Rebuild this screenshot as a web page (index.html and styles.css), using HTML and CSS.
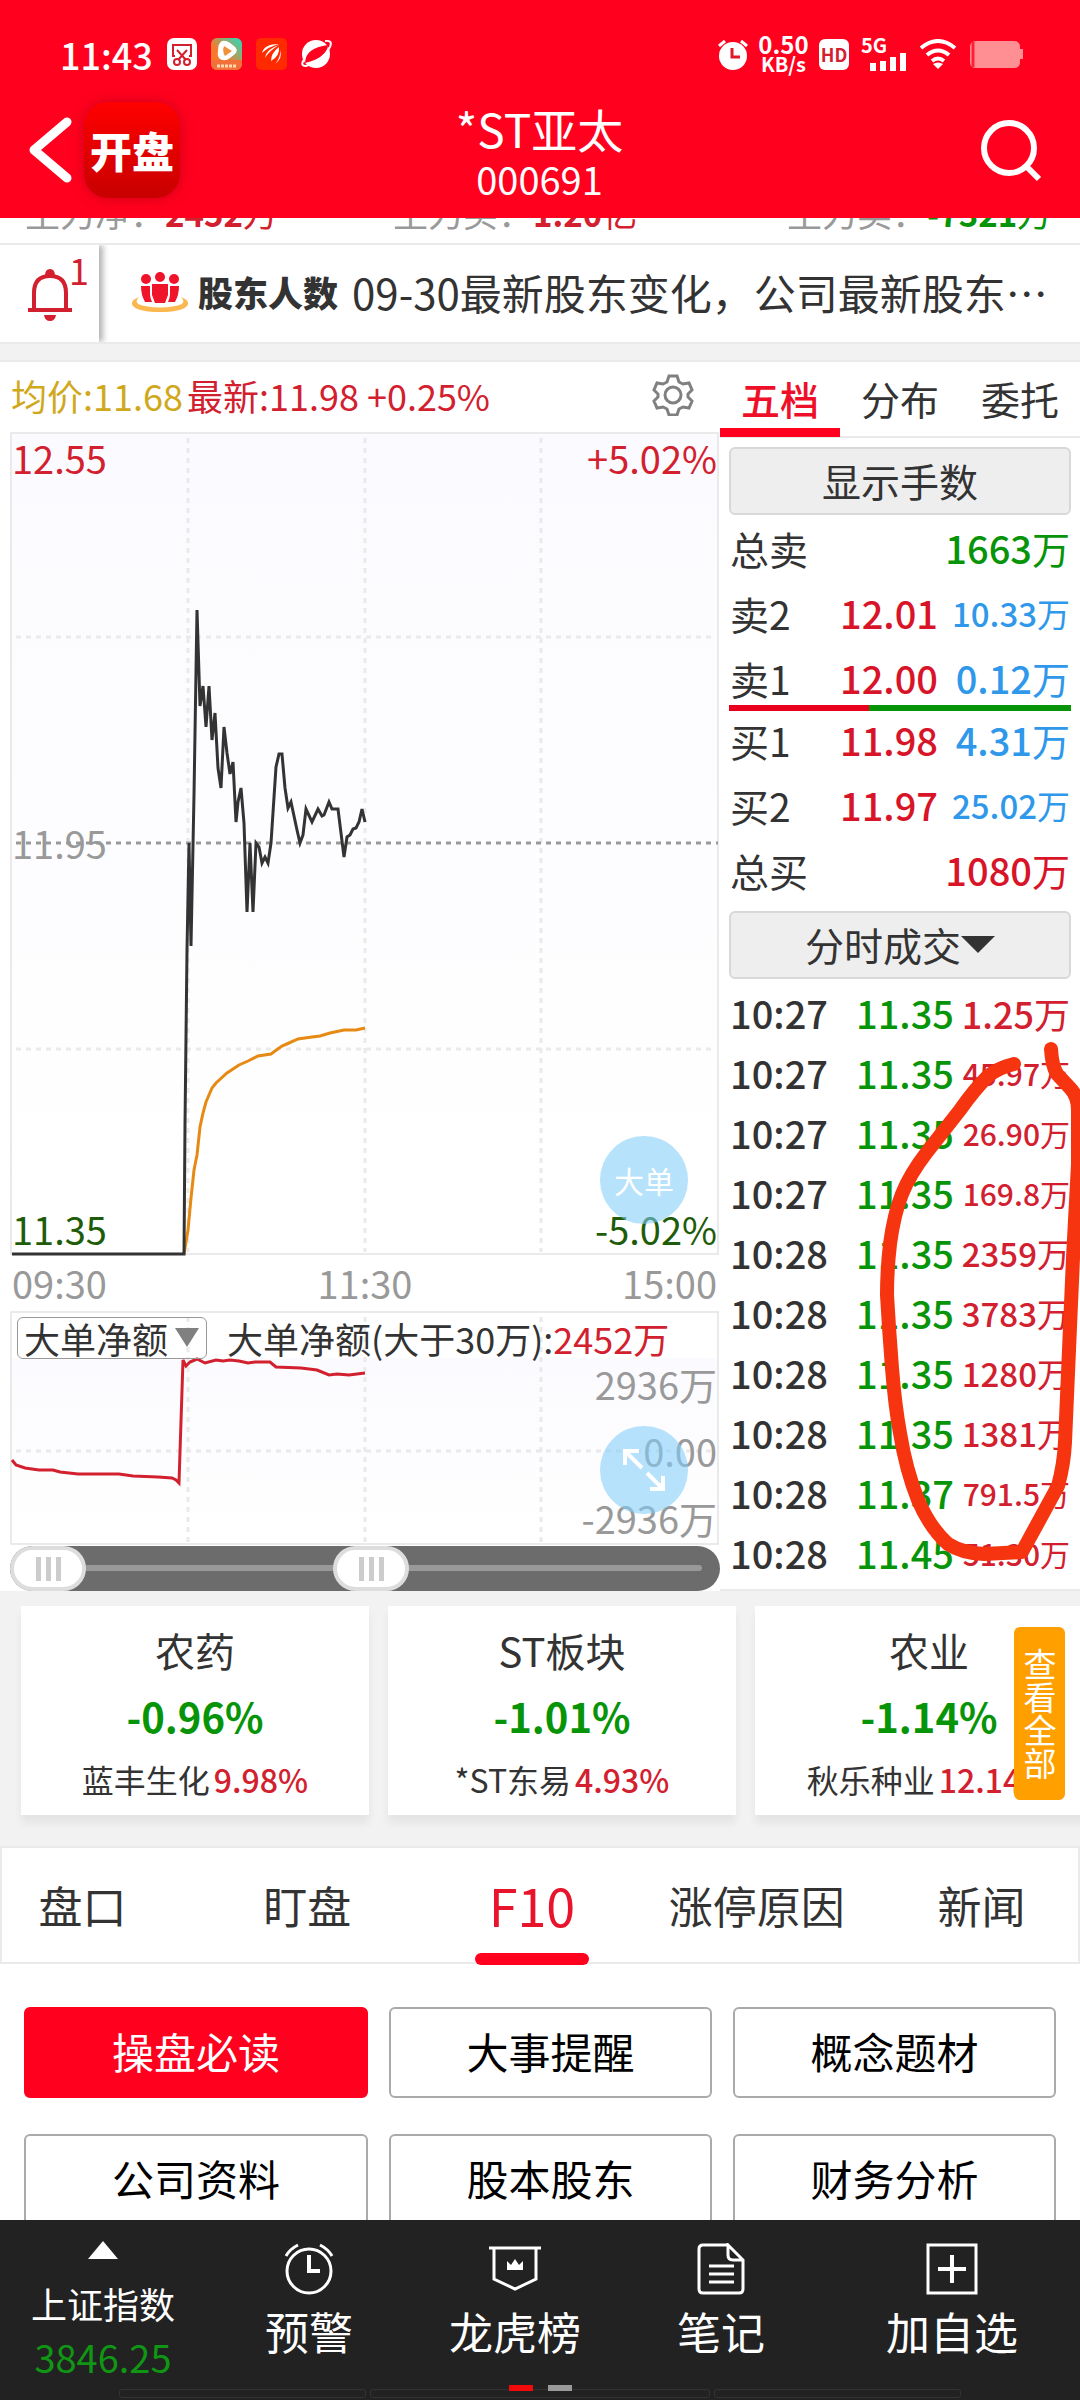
FILE: index.html
```html
<!DOCTYPE html>
<html lang="zh-CN">
<head>
    <meta charset="UTF-8">
    <meta name="viewport" content="width=device-width, initial-scale=1.0">
    <title>*ST亚太 000691</title>
    <link rel="stylesheet" href="styles.css">
</head>
<body>
    <header class="header">
        <div class="status-bar">
            <span class="clock">11:43</span>
            <svg class="status-icon" width="30" height="32" viewBox="0 0 30 32">
                <rect width="30" height="32" rx="7" fill="#fff"/>
                <path d="M8 18H6V7h18v11h-2M10 12l9 10M20 12l-9 10" fill="none" stroke="#d2202f" stroke-width="2"/>
                <circle cx="10" cy="24" r="3" fill="none" stroke="#d2202f" stroke-width="2"/>
                <circle cx="20" cy="24" r="3" fill="none" stroke="#d2202f" stroke-width="2"/>
            </svg>
            <svg class="status-icon" width="31" height="32" viewBox="0 0 31 32">
                <defs>
                    <linearGradient id="video" x1="0" y1="1" x2="1" y2="0">
                        <stop offset="0.4" stop-color="#f77a2c"/>
                        <stop offset="1" stop-color="#1fe0c0"/>
                    </linearGradient>
                </defs>
                <rect width="31" height="32" rx="6" fill="url(#video)"/>
                <path d="M0 22h31v4a6 6 0 0 1-6 6H6a6 6 0 0 1-6-6z" fill="#f4703a"/>
                <path d="M11 3q4-1 8 2l4 3q5 4 1 8l-5 4q-5 4-10 1-3-2-2-8 0-8 4-10z" fill="#fff"/>
                <path d="M13 8l8 5-7 5q-3-5-1-10z" fill="#f0923a"/>
                <path d="M6 28h20" stroke="#ffd9b0" stroke-width="3" stroke-dasharray="3 1"/>
            </svg>
            <svg class="status-icon" width="31" height="32" viewBox="0 0 31 32">
                <rect width="31" height="32" rx="5" fill="#ff2a00"/>
                <path d="M6 15Q8 6 23 6 12 9 6 15zM9 20q1-9 14-13Q13 13 9 20zM15 23q0-8 8-14 1 9-8 14zM19 26q6-7 5-14 3 8-5 14z" fill="#fff"/>
            </svg>
            <svg class="status-icon" width="31" height="32" viewBox="0 0 31 32">
                <circle cx="15" cy="16" r="14" fill="#fff"/>
                <path d="M4 25Q4 10 27 7q0 12-23 18z" fill="#ff001e"/>
                <path d="M4 20q-6 8 1 8Q21 23 29 9q3-7-5-6" fill="none" stroke="#fff" stroke-width="2"/>
            </svg>
            <span class="status-space"></span>
            <svg width="30" height="32" viewBox="0 0 30 32">
                <circle cx="15" cy="18" r="14" fill="#fff"/>
                <path d="M1 8l6-5M29 8l-6-5" stroke="#fff" stroke-width="3"/>
                <path d="M14 10v9h8" fill="none" stroke="#e0182c" stroke-width="3"/>
            </svg>
            <span class="speed"><b>0.50</b><b class="unit">KB/s</b></span>
            <span class="hd">HD</span>
            <span class="signal">
                <b>5G</b>
                <svg width="36" height="18" viewBox="0 0 36 18">
                    <path d="M3 18v-8M13 18V8M23 18V4M33 18V0" stroke="#fff" stroke-width="6"/>
                </svg>
            </span>
            <svg class="wifi" width="38" height="30" viewBox="0 0 38 30">
                <path d="M2 9q17-14 34 0M8 16q11-9 22 0M13 22q6-5 12 0" fill="none" stroke="#fff" stroke-width="4"/>
                <path d="M14 25q5-3 10 0l-5 5z" fill="#fff"/>
            </svg>
            <svg class="battery" width="55" height="29" viewBox="0 0 55 29">
                <path d="M7 1h38q6 0 6 6v2h3v10h-3v3q0 6-6 6H7q-6 0-6-6V7q0-6 6-6z" fill="#ff8f93"/>
                <path d="M4 2v25" stroke="#ff2038" stroke-width="3"/>
            </svg>
        </div>
        <div class="app-bar">
            <div class="app-left">
                <button class="icon-button" aria-label="返回">
                    <svg width="44" height="66" viewBox="0 0 44 66">
                        <path d="M38 5L5 33l33 28" fill="none" stroke="#fff" stroke-width="9" stroke-linecap="round" stroke-linejoin="round"/>
                    </svg>
                </button>
                <a class="app-logo" href="#">开盘</a>
            </div>
            <h1 class="title">*ST亚太<small>000691</small></h1>
            <div class="app-right">
                <button class="icon-button" aria-label="搜索">
                    <svg width="64" height="64" viewBox="0 0 64 64">
                        <circle cx="29" cy="30" r="25" fill="none" stroke="#fff" stroke-width="6"/>
                        <path d="M46 48l13 13" stroke="#fff" stroke-width="6"/>
                    </svg>
                </button>
            </div>
        </div>
    </header>

    <main class="main">
        <div class="funds">
            <span>主力净：<b class="red">2452</b><span class="red">万</span></span>
            <span>主力买：<b class="red">1.20</b><span class="red">亿</span></span>
            <span>主力卖：<b class="green">-7321</b><span class="green">万</span></span>
        </div>

        <div class="notice">
            <button class="bell" aria-label="提醒">
                <svg width="46" height="54" viewBox="0 0 46 54">
                    <path d="M7 42V26q0-17 16-17t16 17v16M1 43h44" fill="none" stroke="#d2202f" stroke-width="4"/>
                    <path d="M18 9q0-7 5-7t5 7zM17 48h12q-1 6-6 6t-6-6z" fill="#d2202f"/>
                </svg>
                <span class="bell-count">1</span>
            </button>
            <a class="notice-link" href="#">
                <svg class="people" width="56" height="40" viewBox="0 0 56 40">
                    <path d="M7 25q-7 7 6 9 15 3 30 0 13-2 6-9 10 4 6 9-6 6-27 6T1 34q-4-5 6-9z" fill="#fbb850"/>
                    <g fill="#f0142b">
                        <circle cx="14" cy="7" r="5"/><circle cx="28" cy="5" r="5"/><circle cx="42" cy="7" r="5"/>
                        <path d="M9 14h9v8q0 4 2 8h-7q-4-7-4-16zM38 14h9q0 9-4 16h-7q2-4 2-8zM20 12h16v11l-3 8H23l-3-8z"/>
                    </g>
                </svg>
                <b>股东人数</b>
                <span class="notice-text">09-30最新股东变化，公司最新股东…</span>
            </a>
        </div>

        <div class="market">
            <section class="charts">
                <div class="quote">
                    <span class="gold">均价:11.68</span>
                    <span class="red">最新:11.98 +0.25%</span>
                    <button class="icon-button gear" aria-label="设置">
                        <svg width="42" height="42" viewBox="0 0 42 42" fill="none" stroke="#808080" stroke-width="3">
                            <path d="M17 2h8l2 6 4 2 6-1 3 7-4 4v3l4 4-3 7-6-1-4 2-2 6h-8l-2-6-4-2-6 1-3-7 4-4v-3l-4-4 3-7 6 1 4-2z"/>
                            <circle cx="21" cy="21" r="8"/>
                        </svg>
                    </button>
                </div>

                <div class="chart">
                    <svg viewBox="0 0 720 874">
                        <defs>
                            <linearGradient id="sky" x1="0" y1="0" x2="0" y2="1">
                                <stop offset="0" stop-color="#fbfbff"/>
                                <stop offset="1" stop-color="#fff"/>
                            </linearGradient>
                        </defs>
                        <rect class="frame" x="11" y="1" width="707" height="821" fill="url(#sky)"/>
                        <path class="grid" d="M188 6v814M365 6v814M541 6v814"/>
                        <path class="grid" d="M16 205h700M16 617h700"/>
                        <path class="middle" d="M16 411h702"/>
                        <text x="12" y="42" class="up">12.55</text>
                        <text x="717" y="42" class="up end">+5.02%</text>
                        <text x="12" y="427" class="axis">11.95</text>
                        <text x="12" y="813" class="down">11.35</text>
                        <text x="717" y="813" class="down end">-5.02%</text>
                        <polyline class="average" points="184,822 188,798 191,766 194,738 197,723 200,695 203,681 206,670 212,656 216,651 227,641 233,637 239,633 248,629 258,624 271,622 275,619 282,614 289,611 298,607 312,605 320,604 330,601 344,598 356,598 365,596"/>
                        <polyline class="price" points="12,822 184,822 185,693 187,518 189,411 191,514 194,363 197,178 200,274 203,254 206,295 209,254 212,308 215,281 218,336 221,356 224,295 227,321 230,342 233,330 236,390 238,370 241,356 244,391 247,480 250,411 253,480 256,411 259,415 262,431 265,425 268,431 271,411 276,335 279,322 282,322 285,356 288,376 291,370 297,398 300,411 303,403 306,377 312,390 318,377 322,384 324,383 329,370 332,377 338,377 344,425 347,405 350,403 353,397 356,396 359,390 362,377 365,390"/>
                        <text x="12" y="867" class="axis">09:30</text>
                        <text x="365" y="867" class="axis center">11:30</text>
                        <text x="717" y="867" class="axis end">15:00</text>
                    </svg>
                    <button class="bubble bubble-order">大单</button>
                </div>

                <div class="chart flow">
                    <svg viewBox="0 0 720 240">
                        <rect class="frame" x="11" y="6" width="707" height="232" fill="#fff"/>
                        <rect x="12" y="52" width="705" height="185" fill="url(#sky)"/>
                        <path class="grid" d="M188 11v226M365 11v226M541 11v226"/>
                        <path class="grid" d="M16 145h700"/>
                        <text x="717" y="94" class="axis end">2936万</text>
                        <text x="717" y="161" class="axis end">0.00</text>
                        <text x="717" y="228" class="axis end">-2936万</text>
                        <polyline class="net" points="12,154 16,159 25,162 39,164 53,164 60,166 78,168 119,168 133,170 158,171 172,172 176,174 179,177 183,54 186,60 190,56 197,53 205,57 216,54 223,55 230,54 239,55 248,57 255,56 270,56 276,61 301,62 317,64 329,69 337,68 349,69 365,67"/>
                    </svg>
                    <div class="flow-head">
                        <span class="picker">
                            <select aria-label="指标">
                                <option>大单净额</option>
                                <option>主力净额</option>
                            </select>
                        </span>
                        <span>大单净额(大于30万):<span class="red">2452万</span></span>
                    </div>
                    <button class="bubble bubble-expand" aria-label="放大">
                        <svg width="44" height="44" viewBox="0 0 44 44" fill="none" stroke="#fff" stroke-width="4">
                            <path d="M20 20L4 4M3 17V3h14M25 25l16 16M41 28v13H28"/>
                        </svg>
                    </button>
                </div>

                <div class="range">
                    <input type="range" min="0" max="100" value="0" aria-label="开始时间">
                    <input type="range" min="0" max="100" value="51" aria-label="结束时间">
                </div>
            </section>

            <section class="orders">
                <nav class="order-tabs">
                    <a class="active" href="#">五档</a>
                    <a href="#">分布</a>
                    <a href="#">委托</a>
                </nav>
                <button class="gray-button">显示手数</button>
                <table class="levels">
                    <tr><th>总卖</th><td></td><td class="green"><b>1663</b>万</td></tr>
                    <tr><th>卖2</th><td class="red"><b>12.01</b></td><td class="blue small"><b>10.33</b>万</td></tr>
                    <tr><th>卖1</th><td class="red"><b>12.00</b></td><td class="blue"><b>0.12</b>万</td></tr>
                </table>
                <div class="ratio"></div>
                <table class="levels">
                    <tr><th>买1</th><td class="red"><b>11.98</b></td><td class="blue"><b>4.31</b>万</td></tr>
                    <tr><th>买2</th><td class="red"><b>11.97</b></td><td class="blue small"><b>25.02</b>万</td></tr>
                    <tr><th>总买</th><td></td><td class="red"><b>1080</b>万</td></tr>
                </table>
                <button class="gray-button">分时成交<i class="caret"></i></button>
                <table class="trades">
                    <tr><td>10:27</td><td>11.35</td><td class="medium"><b>1.25</b>万</td></tr>
                    <tr><td>10:27</td><td>11.35</td><td class="tiny"><b>45.97</b>万</td></tr>
                    <tr><td>10:27</td><td>11.35</td><td class="tiny"><b>26.90</b>万</td></tr>
                    <tr><td>10:27</td><td>11.35</td><td class="tiny"><b>169.8</b>万</td></tr>
                    <tr><td>10:28</td><td>11.35</td><td><b>2359</b>万</td></tr>
                    <tr><td>10:28</td><td>11.35</td><td><b>3783</b>万</td></tr>
                    <tr><td>10:28</td><td>11.35</td><td><b>1280</b>万</td></tr>
                    <tr><td>10:28</td><td>11.35</td><td><b>1381</b>万</td></tr>
                    <tr><td>10:28</td><td>11.37</td><td class="tiny"><b>791.5</b>万</td></tr>
                    <tr><td>10:28</td><td>11.45</td><td class="tiny"><b>51.30</b>万</td></tr>
                </table>
                <!-- hand-drawn circle round the big trades -->
                <svg class="marker" width="210" height="540" viewBox="0 0 210 540">
                    <path d="M144 34Q128 38 118 46 104 60 90 80L57 122Q40 144 32 164 24 184 20 214 17 240 17 265 19 300 22 338 25 376 30 403 36 440 48 470 60 498 78 514 92 523 114 524L152 522 188 456Q194 434 195 412L200 297 203 228 208 134 208 80Q208 66 200 58L187 44Q182 36 181 19"/>
                </svg>
            </section>
        </div>

        <div class="sectors">
            <div class="cards">
                <a class="card" href="#">
                    <span class="card-name">农药</span>
                    <b class="card-change green">-0.96%</b>
                    <span class="card-stock">蓝丰生化<b class="red">9.98%</b></span>
                </a>
                <a class="card" href="#">
                    <span class="card-name">ST板块</span>
                    <b class="card-change green">-1.01%</b>
                    <span class="card-stock">*ST东易<b class="red">4.93%</b></span>
                </a>
                <a class="card" href="#">
                    <span class="card-name">农业</span>
                    <b class="card-change green">-1.14%</b>
                    <span class="card-stock">秋乐种业<b class="red">12.14%</b></span>
                </a>
            </div>
            <button class="view-all">查看全部</button>
        </div>

        <nav class="tabs">
            <div class="tabs-inner">
                <a href="#">盘口</a>
                <a href="#">盯盘</a>
                <a class="active" href="#">F10</a>
                <a href="#">涨停原因</a>
                <a href="#">新闻</a>
            </div>
        </nav>

        <div class="topics">
            <button class="active">操盘必读</button>
            <button>大事提醒</button>
            <button>概念题材</button>
            <button>公司资料</button>
            <button>股本股东</button>
            <button>财务分析</button>
        </div>
    </main>

    <footer class="footer">
        <a class="index" href="#">
            <svg width="30" height="18" viewBox="0 0 30 18"><path d="M15 0l15 18H0z" fill="#fff"/></svg>
            <span>上证指数</span>
            <span class="index-value">3846.25</span>
        </a>
        <a class="action" href="#">
            <svg width="52" height="52" viewBox="0 0 52 52" fill="none" stroke="#fff" stroke-width="3">
                <circle cx="26" cy="28" r="22"/>
                <path d="M26 12v16h11" stroke-width="4"/>
                <path d="M3 13q4-7 12-11M49 13q-4-7-12-11"/>
            </svg>
            <span>预警</span>
        </a>
        <a class="action" href="#">
            <svg width="52" height="52" viewBox="0 0 52 52" fill="none" stroke="#fff" stroke-width="3">
                <path d="M0 5h52M5 5v31l21 10 21-10V5"/>
                <path d="M18 27V18l4 4 4-6 4 6 4-4v9z" fill="#fff" stroke="none"/>
            </svg>
            <span>龙虎榜</span>
        </a>
        <a class="action" href="#">
            <svg width="52" height="52" viewBox="0 0 52 52" fill="none" stroke="#fff" stroke-width="3">
                <path d="M33 2H8q-4 0-4 4v40q0 4 4 4h36q4 0 4-4V17L33 2v10q0 5 5 5h10M14 23h25M14 31h25M14 39h25"/>
            </svg>
            <span>笔记</span>
        </a>
        <a class="action" href="#">
            <svg width="52" height="52" viewBox="0 0 52 52" fill="none" stroke="#fff" stroke-width="3">
                <path d="M2 2h48v48H2z"/>
                <path d="M26 12v28M12 26h28" stroke-width="4"/>
            </svg>
            <span>加自选</span>
        </a>
        <div class="handles"><i></i><i></i><i></i></div>
        <div class="dots"><i></i><i></i></div>
    </footer>
</body>
</html>
```
FILE: styles.css
```css
* {
    box-sizing: border-box;
}
body {
    margin: 0;
    height: 100vh;
    display: flex;
    flex-direction: column;
    overflow: hidden;
    background: #fff;
    color: #333;
    font-family: "Noto Sans CJK SC", "Noto Sans", sans-serif;
    font-size: 39px;
}
a {
    color: inherit;
    text-decoration: none;
}
button, select {
    font-family: inherit;
    color: inherit;
    padding: 0;
    border: none;
    background: none;
    cursor: pointer;
}
svg {
    display: block;
    flex: none;
}
b {
    font-weight: 500;
}
.red {
    color: #d2202f;
}
.green {
    color: #089408;
}
.blue {
    color: #2f98ea;
}
.gold {
    color: #d0a81c;
}

/* header */
.header {
    flex: none;
    background: #ff001e;
    color: #fff;
}
.status-bar {
    display: flex;
    align-items: center;
    height: 82px;
    padding: 26px 60px 0;
}
.clock {
    width: 107px;
    font-size: 36px;
    font-weight: 500;
    line-height: 50px;
}
.status-icon {
    margin-right: 14px;
}
.status-space {
    flex: 1;
}
.speed {
    width: 51px;
    margin: 0 10px;
    font-size: 24px;
    line-height: 20px;
    text-align: center;
}
.speed b {
    display: block;
    font-weight: 700;
}
.speed .unit {
    font-size: 20px;
}
.hd {
    width: 30px;
    border-radius: 6px;
    background: #fff;
    color: #d2202f;
    font-size: 18px;
    font-weight: 700;
    line-height: 31px;
    text-align: center;
}
.signal {
    display: flex;
    flex-direction: column;
    width: 46px;
    margin-left: 12px;
    font-size: 20px;
    line-height: 16px;
}
.signal b {
    font-weight: 700;
}
.signal svg {
    margin-left: 9px;
}
.wifi {
    margin: 0 12px;
}
.battery {
    margin-right: -4px;
}
.app-bar {
    display: grid;
    grid-template-columns: 1fr auto 1fr;
    align-items: center;
    height: 136px;
    padding: 0 36px 0 29px;
}
.icon-button {
    display: block;
}
.app-left {
    display: flex;
    align-items: center;
    gap: 11px;
}
.app-right {
    display: flex;
    justify-content: flex-end;
}
.app-logo {
    width: 96px;
    border-radius: 24px;
    background: linear-gradient(#ff0000, #c80000);
    box-shadow: 0 0 12px rgba(160, 0, 20, 0.5);
    font-size: 42px;
    font-weight: 900;
    line-height: 96px;
    text-align: center;
}
.title {
    margin: 0;
    padding: 4px 0 0 6px;
    font-size: 46px;
    font-weight: 400;
    line-height: 54px;
    text-align: center;
}
.title small {
    display: block;
    font-size: 38px;
    line-height: 48px;
}

/* scrolled page */
.main {
    flex: 1;
    min-height: 0;
    overflow: hidden;
}
.funds {
    display: grid;
    grid-template-columns: 368fr 394fr 268fr;
    align-content: end;
    height: 27px;
    padding: 0 25px 6px;
    border-bottom: 2px solid #eaeaea;
    color: #999;
    font-size: 35px;
    line-height: 48px;
    white-space: nowrap;
    overflow: hidden;
}
.funds b {
    font-size: 33px;
    font-weight: 700;
}
.notice {
    display: flex;
    height: 99px;
    border-bottom: 2px solid #eaeaea;
    overflow: hidden;
}
.bell {
    position: relative;
    flex: none;
    width: 99px;
    padding-left: 27px;
    box-shadow: 4px 0 6px rgba(0, 0, 0, 0.3);
}
.bell-count {
    position: absolute;
    top: 4px;
    right: 10px;
    color: #d2202f;
    font-size: 36px;
    line-height: 40px;
}
.notice-link {
    display: flex;
    align-items: center;
    min-width: 0;
    padding: 0 0 4px 33px;
}
.notice-link b {
    flex: none;
    margin: 0 14px 0 10px;
    font-size: 35px;
    font-weight: 900;
}
.notice-text {
    font-size: 42px;
    white-space: nowrap;
}
.market {
    display: grid;
    grid-template-columns: 2fr 1fr;
    border-top: 16px solid #f2f2f2;
}

/* charts */
.quote {
    display: flex;
    align-items: center;
    gap: 4px;
    height: 72px;
    padding: 0 26px 4px 11px;
    border-top: 2px solid #eaeaea;
    font-size: 36px;
    white-space: nowrap;
}
.gear {
    margin-left: auto;
}
.chart {
    position: relative;
}
.chart > svg {
    width: 100%;
}
.chart text {
    font-size: 38px;
}
.frame {
    stroke: #eaeaea;
    stroke-width: 2;
}
.grid {
    stroke: #eaeaea;
    stroke-width: 3;
    stroke-dasharray: 5 5;
}
.middle {
    stroke: #999;
    stroke-width: 3;
    stroke-dasharray: 5 5;
}
.axis {
    fill: #999;
}
.up {
    fill: #d2202f;
}
.down {
    fill: #1f5c0a;
}
.end {
    text-anchor: end;
}
.center {
    text-anchor: middle;
}
.price, .average, .net {
    fill: none;
    stroke: #333;
    stroke-width: 3;
}
.average {
    stroke: #e68a14;
}
.net {
    stroke: #d2202f;
}
.bubble {
    position: absolute;
    right: 32px;
    display: flex;
    align-items: center;
    justify-content: center;
    width: 88px;
    height: 88px;
    border-radius: 50%;
    background: rgba(130, 205, 250, 0.58);
    color: #fff;
    font-size: 30px;
}
.bubble-order {
    bottom: 82px;
}
.bubble-expand {
    bottom: 32px;
}
.flow-head {
    position: absolute;
    top: 11px;
    left: 17px;
    display: flex;
    align-items: center;
    gap: 20px;
    font-size: 36px;
    line-height: 42px;
    white-space: nowrap;
}
.picker {
    position: relative;
}
.picker::after {
    content: "";
    position: absolute;
    top: 11px;
    right: 8px;
    border: 12px solid transparent;
    border-top: 19px solid #808080;
    border-bottom: 0;
    pointer-events: none;
}
.picker select {
    display: block;
    width: 190px;
    height: 42px;
    padding-left: 6px;
    border: 1px solid #999;
    border-radius: 6px;
    appearance: none;
    font-size: 36px;
    line-height: 40px;
}
.range {
    position: relative;
    height: 45px;
    margin-left: 10px;
    border-radius: 23px;
    background: #6c6c6c;
}
.range::before {
    content: "";
    position: absolute;
    top: 19px;
    left: 70px;
    right: 18px;
    height: 6px;
    border-radius: 3px;
    background: #999;
}
.range input {
    position: absolute;
    inset: 0;
    width: 100%;
    height: 45px;
    margin: 0;
    appearance: none;
    background: none;
    pointer-events: none;
}
.range input::-webkit-slider-thumb {
    appearance: none;
    width: 76px;
    height: 45px;
    border: 4px solid #ddd;
    border-radius: 23px;
    background: linear-gradient(90deg, #ccc 5px, transparent 5px 10px, #ccc 10px 15px, transparent 15px 20px, #ccc 20px) center / 25px 24px no-repeat #fff;
    pointer-events: auto;
}

/* order book */
.orders {
    position: relative;
    border-top: 2px solid #eaeaea;
    border-bottom: 2px solid #eaeaea;
}
.order-tabs {
    display: grid;
    grid-template-columns: repeat(3, 1fr);
    height: 76px;
    border-bottom: 2px solid #eaeaea;
    line-height: 72px;
    text-align: center;
}
.order-tabs .active {
    height: 75px;
    border-bottom: 9px solid #ff001e;
    color: #ee1028;
    font-weight: 500;
}
.gray-button {
    display: flex;
    align-items: center;
    justify-content: center;
    width: calc(100% - 18px);
    height: 68px;
    margin: 9px 9px 0;
    padding-bottom: 2px;
    border: 2px solid #d8d8d8;
    border-radius: 6px;
    background: #eee;
    font-size: 39px;
}
.caret {
    border: 17px solid transparent;
    border-top-color: #333;
    border-bottom: 0;
}
.levels, .trades {
    width: calc(100% - 20px);
    margin: 0 10px;
    border-collapse: collapse;
    table-layout: fixed;
    white-space: nowrap;
}
.levels th, .levels td {
    height: 65px;
    padding: 0;
    font-weight: 400;
    line-height: 60px;
    text-align: right;
}
.levels th {
    width: 90px;
    text-align: left;
}
.levels td {
    font-size: 38px;
}
.levels td:last-child {
    width: 132px;
}
.levels .small {
    font-size: 33px;
}
.ratio {
    position: relative;
    height: 6px;
    margin: -5px 9px -4px;
    background: linear-gradient(90deg, #e8001c 41%, #089408 41%);
}
.levels .red {
    color: #d81428;
}
.trades {
    margin-top: 4px;
}
.trades td {
    height: 60px;
    padding: 0;
    font-size: 38px;
    font-weight: 500;
    line-height: 58px;
}
.trades td:nth-child(2) {
    width: 108px;
    color: #089408;
    text-align: right;
}
.trades td:last-child {
    width: 116px;
    color: #d2202f;
    font-size: 33px;
    font-weight: 400;
    text-align: right;
}
.trades .medium:last-child {
    font-size: 36px;
}
.trades .tiny:last-child {
    font-size: 30px;
}
.marker {
    position: absolute;
    top: 668px;
    right: 0;
    fill: none;
    stroke: #f63510;
    stroke-width: 14;
    stroke-linecap: round;
    stroke-linejoin: round;
}

/* sectors */
.sectors {
    position: relative;
    padding: 15px 0 31px;
    background: #f2f2f2;
    overflow: hidden;
}
.cards {
    display: flex;
    gap: 19px;
    padding-left: 21px;
}
.card {
    display: flex;
    flex: none;
    flex-direction: column;
    align-items: center;
    width: 348px;
    height: 209px;
    padding-top: 11px;
    background: #fff;
    box-shadow: 0 8px 8px rgba(0, 0, 0, 0.06);
    font-size: 40px;
    line-height: 66px;
}
.card-change {
    font-weight: 700;
}
.card-stock {
    font-size: 32px;
    line-height: 60px;
}
.card-stock b {
    margin-left: 4px;
}
.view-all {
    position: absolute;
    top: 36px;
    right: 15px;
    width: 51px;
    height: 173px;
    border-radius: 6px;
    background: #ffa000;
    color: #fff;
    font-size: 33px;
    line-height: 51px;
    writing-mode: vertical-rl;
}
.tabs {
    height: 118px;
    border: 2px solid #eaeaea;
}
.tabs-inner {
    display: grid;
    grid-template-columns: repeat(5, 1fr);
    margin: 0 -16px 0 -32px;
    font-size: 44px;
    line-height: 114px;
    text-align: center;
}
.tabs .active {
    position: relative;
    color: #e8142c;
    font-size: 52px;
}
.tabs .active::after {
    content: "";
    position: absolute;
    top: 105px;
    left: calc(50% - 57px);
    width: 114px;
    height: 12px;
    border-radius: 6px;
    background: #ff001e;
}
.topics {
    display: grid;
    grid-template-columns: 344fr 323fr 323fr;
    gap: 36px 21px;
    padding: 43px 24px;
}
.topics button {
    height: 91px;
    padding-bottom: 4px;
    border: 2px solid #aaa;
    border-radius: 6px;
    color: #000;
    font-size: 42px;
}
.topics .active {
    border-color: #ff001e;
    background: #ff001e;
    color: #fff;
}

/* bottom bar */
.footer {
    position: relative;
    flex: none;
    display: grid;
    grid-template-columns: 206fr 206fr 206fr 206fr 256fr;
    height: 180px;
    background: #222;
    color: #fff;
    text-align: center;
}
.index, .action {
    display: flex;
    flex-direction: column;
    align-items: center;
}
.index {
    padding-top: 21px;
    font-size: 36px;
    line-height: 54px;
}
.index svg {
    margin-bottom: 17px;
}
.index-value {
    color: #109614;
    font-size: 38px;
}
.action {
    padding-top: 23px;
    font-size: 44px;
}
.action span {
    margin-top: 4px;
    line-height: 64px;
}
.handles {
    position: absolute;
    bottom: 2px;
    left: 11%;
    right: 11%;
    display: grid;
    grid-template-columns: 247fr 340fr 247fr;
    gap: 4px;
}
.handles i {
    height: 9px;
    border: 1px solid #333;
    border-radius: 3px;
}
.dots {
    position: absolute;
    bottom: 9px;
    left: 0;
    right: 0;
    display: flex;
    justify-content: center;
    gap: 15px;
}
.dots i {
    width: 24px;
    height: 6px;
    background: #999;
}
.dots i:first-child {
    background: #f00a0a;
}
```
